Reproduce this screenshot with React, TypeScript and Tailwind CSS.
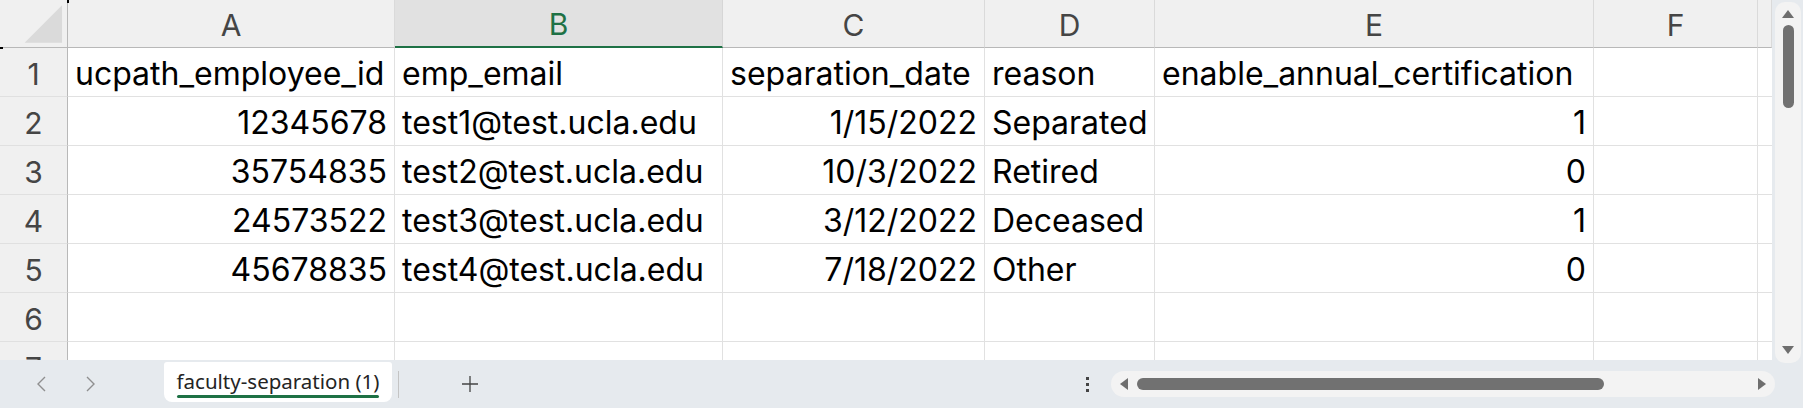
import React from "react";

const cols = ["A", "B", "C", "D", "E", "F", ""];

type Cell = { t: string; r?: boolean };
const rows: Cell[][] = [
  [{ t: "ucpath_employee_id" }, { t: "emp_email" }, { t: "separation_date" }, { t: "reason" }, { t: "enable_annual_certification" }, { t: "" }, { t: "" }],
  [{ t: "12345678", r: true }, { t: "test1@test.ucla.edu" }, { t: "1/15/2022", r: true }, { t: "Separated" }, { t: "1", r: true }, { t: "" }, { t: "" }],
  [{ t: "35754835", r: true }, { t: "test2@test.ucla.edu" }, { t: "10/3/2022", r: true }, { t: "Retired" }, { t: "0", r: true }, { t: "" }, { t: "" }],
  [{ t: "24573522", r: true }, { t: "test3@test.ucla.edu" }, { t: "3/12/2022", r: true }, { t: "Deceased" }, { t: "1", r: true }, { t: "" }, { t: "" }],
  [{ t: "45678835", r: true }, { t: "test4@test.ucla.edu" }, { t: "7/18/2022", r: true }, { t: "Other" }, { t: "0", r: true }, { t: "" }, { t: "" }],
  [{ t: "" }, { t: "" }, { t: "" }, { t: "" }, { t: "" }, { t: "" }, { t: "" }],
  [{ t: "" }, { t: "" }, { t: "" }, { t: "" }, { t: "" }, { t: "" }, { t: "" }],
];

const font = { fontFamily: "Inter, 'Liberation Sans', sans-serif" };

export default function App() {
  return (
    <div className="relative flex w-[1803px] h-[408px] overflow-hidden bg-[#e6eaee]" style={font}>
      {/* left column: grid + tab bar */}
      <div className="flex flex-col w-[1772px]">
        <div className="h-[360px] overflow-hidden bg-white">
          <div className="grid grid-cols-[68px_327px_328px_262px_170px_439px_164px_14px] text-[32px] leading-none text-black">
            {/* header row */}
            <div className="h-[48px] bg-[#f0f0f0] border-r border-b border-[#b8b8b8] flex items-center justify-center">
              <svg width="68" height="48" viewBox="0 0 68 48">
                <polygon points="63,5 63,43 25,43" fill="#dadada" />
              </svg>
            </div>
            {cols.map((c, i) =>
              c === "B" ? (
                <div key={i} className="h-[48px] pt-[2px] text-[30px] bg-[#e1e1e1] border-r border-r-[#d6d6d6] border-b-2 border-b-[#1e7145] flex items-center justify-center text-[#1e7145]">
                  {c}
                </div>
              ) : (
                <div key={i} className="h-[48px] pt-[2px] text-[30px] bg-[#f0f0f0] border-r border-r-[#dadada] border-b border-b-[#b8b8b8] flex items-center justify-center text-[#454545]">
                  {c}
                </div>
              )
            )}
            {rows.map((row, ri) => (
              <React.Fragment key={ri}>
                <div className="h-[49px] pt-[3px] text-[30px] bg-[#f0f0f0] border-r border-r-[#b8b8b8] border-b border-b-[#e0e0e0] flex items-center justify-center text-[#454545]">
                  {ri + 1}
                </div>
                {row.map((cell, ci) => (
                  <div
                    key={ci}
                    className={`h-[49px] pt-[4px] border-r border-b border-[#e1e1e1] flex items-center px-[7px] whitespace-nowrap ${cell.r ? "justify-end" : "justify-start"}`}
                  >
                    {cell.t}
                  </div>
                ))}
              </React.Fragment>
            ))}
          </div>
        </div>

        {/* tab bar */}
        <div className="h-[48px] flex items-center bg-[#e6eaee]">
          <div className="w-[164px] h-full flex items-center pl-[35px] gap-[34px]">
            <svg width="14" height="18" viewBox="0 0 14 18">
              <polyline points="10,2 3,9 10,16" fill="none" stroke="#8f8f8f" strokeWidth="1.4" />
            </svg>
            <svg width="14" height="18" viewBox="0 0 14 18">
              <polyline points="4,2 11,9 4,16" fill="none" stroke="#8f8f8f" strokeWidth="1.4" />
            </svg>
          </div>
          <div className="self-start mt-[2px] w-[228px] h-[40px] bg-white rounded-b-[8px] rounded-t-[3px] flex flex-col items-center justify-center">
            <span className="text-[20.5px] leading-[24px] text-[#242424] mt-[3px]" style={{ fontFamily: "'Noto Sans', 'Open Sans', sans-serif" }}>
              faculty-separation (1)
            </span>
            <div className="mt-[2px] w-[202px] h-[3px] bg-[#1e7145] rounded-full" />
          </div>
          <div className="ml-[6px] w-px h-[27px] bg-[#c4c4c4]" />
          <div className="ml-[62px]">
            <svg width="18" height="18" viewBox="0 0 18 18">
              <path d="M9 1 V17 M1 9 H17" stroke="#444" strokeWidth="1.3" />
            </svg>
          </div>
          <div className="ml-auto flex items-center">
            <div className="flex flex-col gap-[3px] mr-[22px]">
              <div className="w-[3px] h-[3px] bg-[#444]" />
              <div className="w-[3px] h-[3px] bg-[#444]" />
              <div className="w-[3px] h-[3px] bg-[#444]" />
            </div>
            <div className="relative -mr-[3px] w-[664px] h-[26px] bg-[#f3f3f3] rounded-full flex items-center pl-[8px] pr-[8px]">
              <svg width="10" height="12" viewBox="0 0 10 12">
                <polygon points="9,0 9,12 1,6" fill="#6e6e6e" />
              </svg>
              <div className="ml-[8px] w-[467px] h-[12px] bg-[#717171] rounded-full" />
              <svg className="ml-auto" width="10" height="12" viewBox="0 0 10 12">
                <polygon points="1,0 1,12 9,6" fill="#6e6e6e" />
              </svg>
            </div>
          </div>
        </div>
      </div>

      {/* right column: vertical scrollbar */}
      <div className="w-[31px] bg-[#e6eaee] pl-[3px] pt-[2px]">
        <div className="w-[26px] h-[361px] bg-[#f3f3f3] rounded-[10px] flex flex-col items-center pt-[7px] pb-[8px]">
          <svg width="12" height="10" viewBox="0 0 12 10">
            <polygon points="0,9 12,9 6,1" fill="#6e6e6e" />
          </svg>
          <div className="mt-[6px] w-[11px] h-[83px] bg-[#717171] rounded-full" />
          <svg className="mt-auto" width="12" height="10" viewBox="0 0 12 10">
            <polygon points="0,1 12,1 6,9" fill="#6e6e6e" />
          </svg>
        </div>
      </div>

      {/* tiny screen-edge marks */}
      <div className="absolute left-[67px] top-0 w-[2px] h-[3px] bg-black" />
      <div className="absolute left-0 top-[47px] w-[3px] h-[2px] bg-black" />
    </div>
  );
}
